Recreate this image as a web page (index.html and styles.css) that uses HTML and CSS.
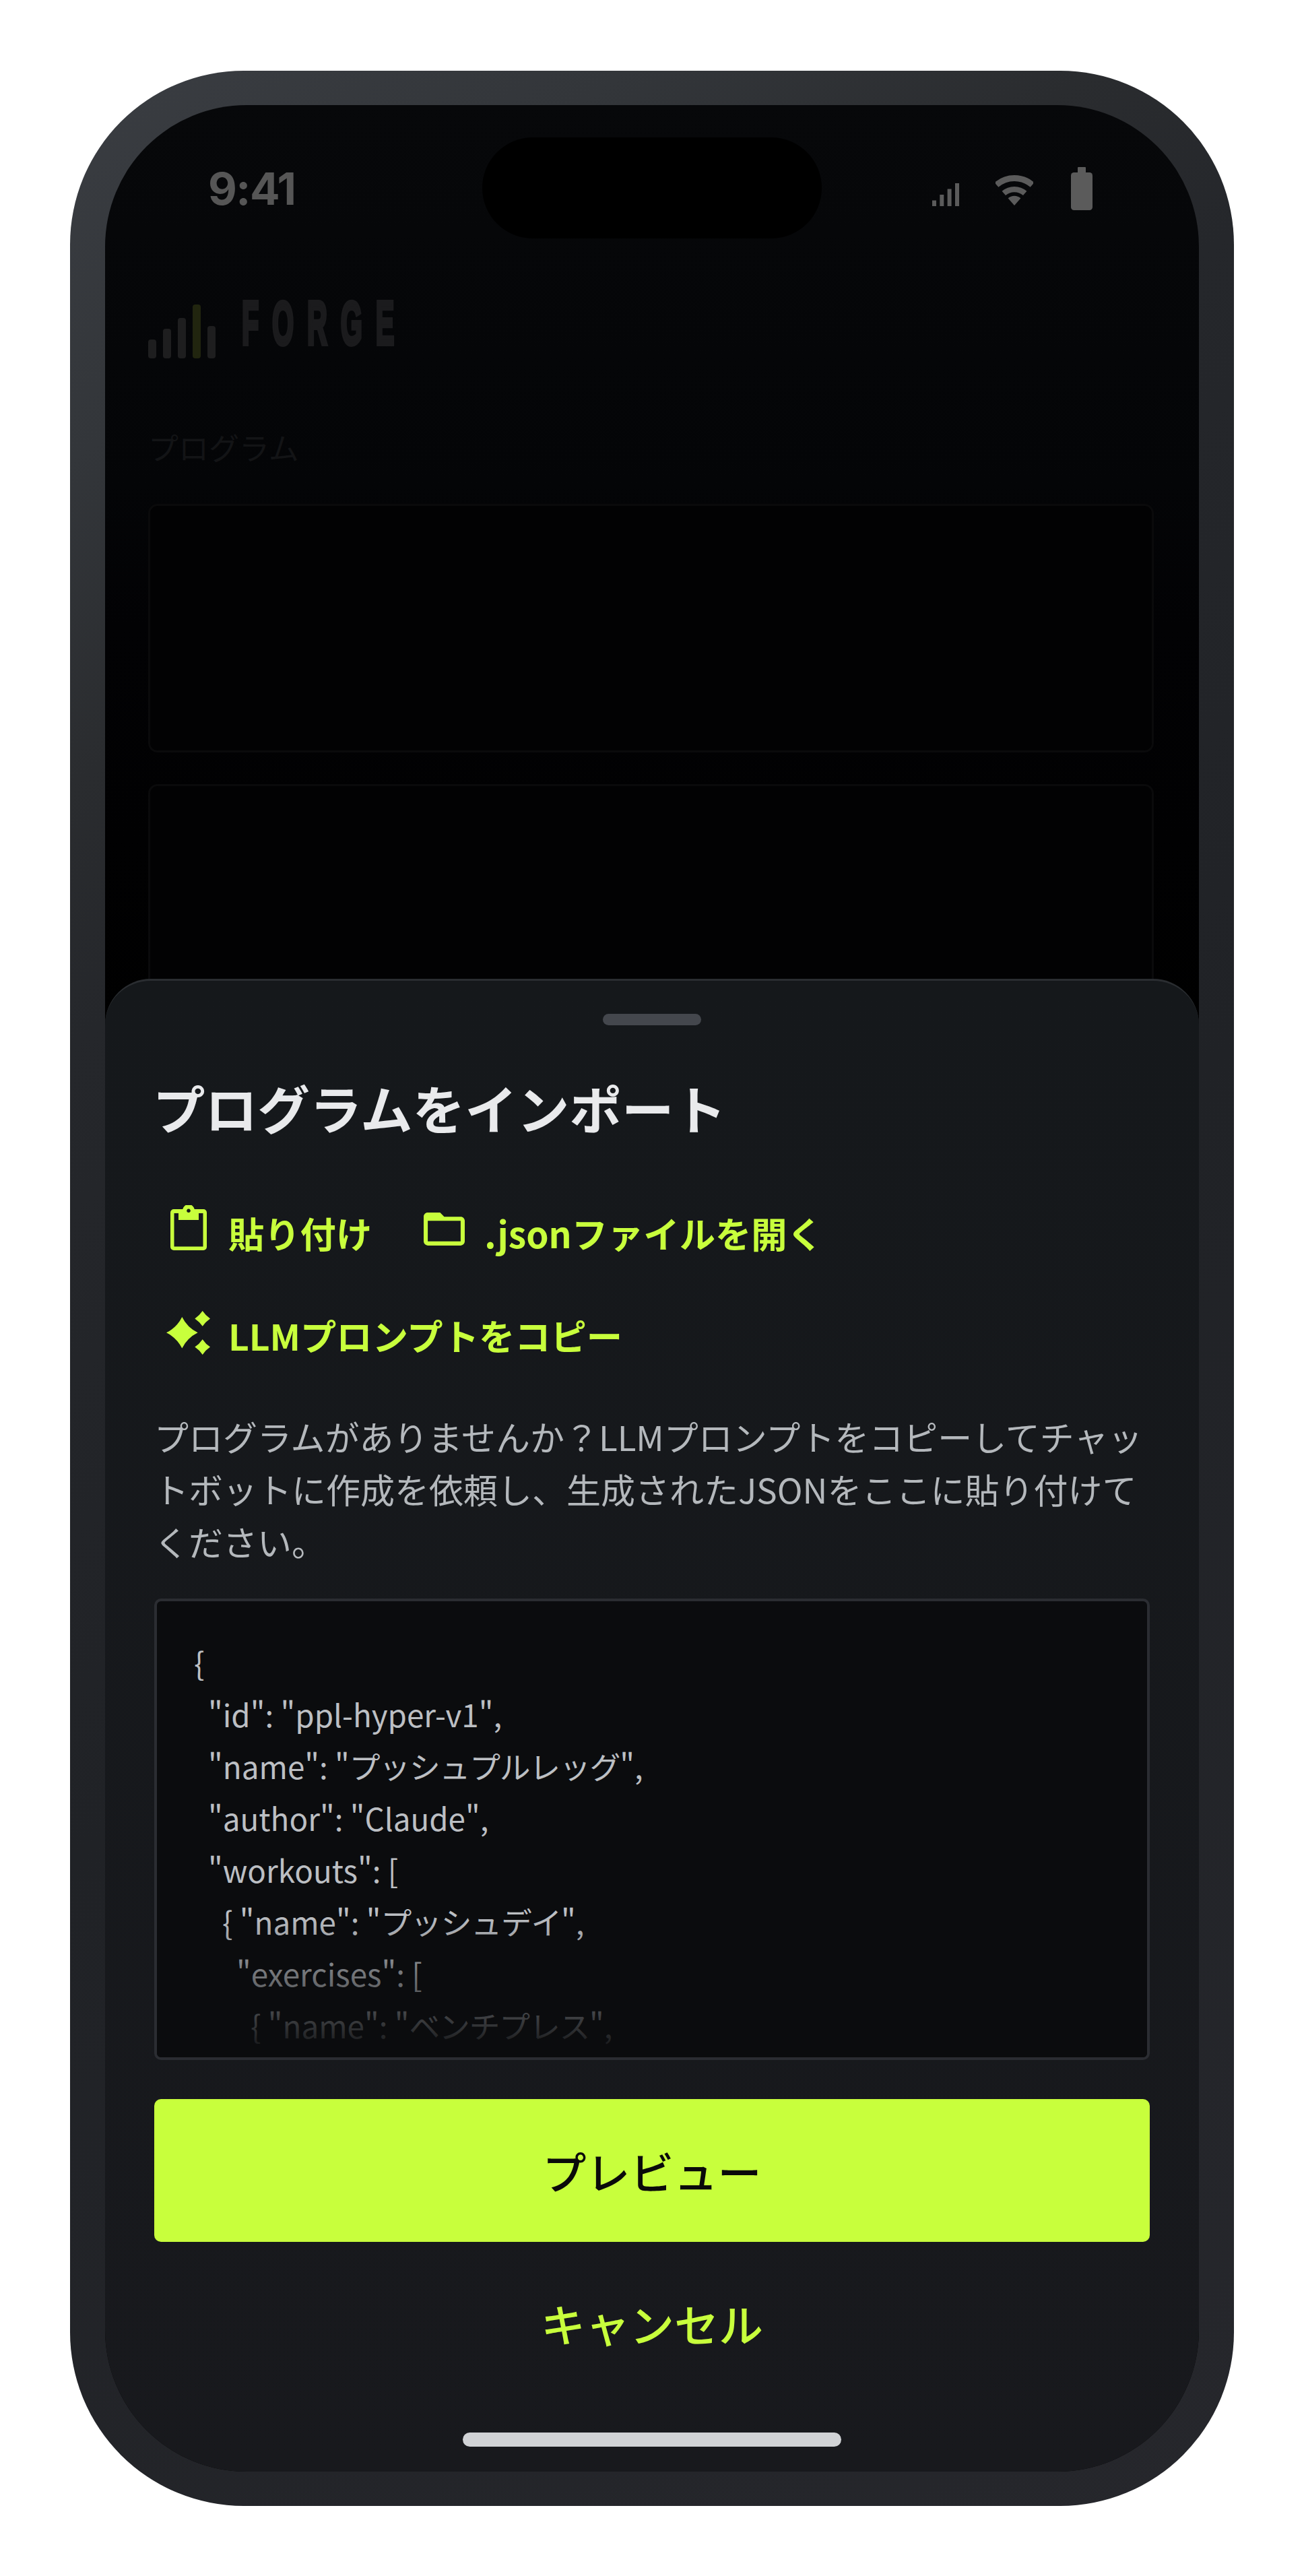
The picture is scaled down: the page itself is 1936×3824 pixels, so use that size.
FILE: index.html
```html
<!DOCTYPE html>
<html lang="ja">
<head>
<meta charset="utf-8">
<title>FORGE</title>
<link rel="stylesheet" href="styles.css">
</head>
<body>
<main class="phone">
  <div class="screen">
    <div class="island"></div>
    <header class="status">
      <span class="time">9:41</span>
      <div class="status-icons">
        <svg class="ic-signal" viewBox="0 0 40 64" aria-hidden="true"><rect x="0" y="49.5" width="6" height="8.5"/><rect x="11.3" y="41" width="6" height="17"/><rect x="22.6" y="32.5" width="6" height="25.5"/><rect x="34" y="24" width="6" height="34"/></svg>
        <svg class="ic-wifi" viewBox="0 0 56 64" aria-hidden="true"><g transform="translate(0 12)"><path class="wifi-arc" stroke-width="9" d="M1.4 14.4A40.5 40.5 0 0 1 54.6 14.4"/><path class="wifi-arc" stroke-width="8.3" d="M12.3 26.9A24 24 0 0 1 43.7 26.9"/><path d="M28 45L18.6 34.2A14.3 14.3 0 0 1 37.4 34.2Z"/></g></svg>
        <svg class="ic-battery" viewBox="0 0 32 64" aria-hidden="true"><rect x="10" y="0" width="12" height="9" rx="1"/><rect x="0" y="8" width="32" height="56" rx="4.5"/></svg>
      </div>
    </header>
    <div class="logo">
      <svg class="logo-mark" viewBox="0 0 100 80" aria-hidden="true"><rect x="0" y="52" width="12" height="28" rx="4"/><rect x="22" y="36" width="12" height="44" rx="4"/><rect x="44" y="20" width="12" height="60" rx="4"/><rect class="logo-accent" x="66" y="0" width="12" height="80" rx="4"/><rect x="88" y="32" width="12" height="48" rx="4"/></svg>
      <span class="logo-text">FORGE</span>
    </div>
    <h2 class="bg-label">プログラム</h2>
    <div class="bg-card"></div>
    <div class="bg-card"></div>

    <section class="sheet">
      <div class="handle"></div>
      <h1 class="sheet-title">プログラムをインポート</h1>
      <div class="actions">
        <button class="action">
          <span class="action-icon">
            <svg class="ic-clip" viewBox="0 0 54 67" aria-hidden="true"><path fill-rule="evenodd" d="M5 6H18.2A9 9 0 0 1 35.8 6H49A5 5 0 0 1 54 11V62A5 5 0 0 1 49 67H5A5 5 0 0 1 0 62V11A5 5 0 0 1 5 6ZM5.5 12V61.5H48.5V12H42V22H12V12ZM27 5.5A2.8 2.8 0 1 0 27.01 5.5Z"/></svg>
          </span>
          <span class="action-text">貼り付け</span>
        </button>
        <button class="action">
          <span class="action-icon">
            <svg class="ic-folder" viewBox="2 4 20 16" aria-hidden="true"><path d="M20,18H4V8H20M20,6H12L10,4H4C2.89,4 2,4.89 2,6V18A2,2 0 0,0 4,20H20A2,2 0 0,0 22,18V8C22,6.89 21.1,6 20,6Z"/></svg>
          </span>
          <span class="action-text">.jsonファイルを開く</span>
        </button>
      </div>
      <div class="actions actions-second">
        <button class="action">
          <span class="action-icon">
            <svg class="ic-spark" viewBox="0 0 65 65" aria-hidden="true"><path d="M23.3 9Q31 24.6 46.6 32.3Q31 40 23.3 55.6Q15.6 40 0 32.3Q15.6 24.6 23.3 9Z"/><path d="M53.7 0Q58.3 6.8 65 11.4Q58.3 16 53.7 22.8Q49.1 16 42.3 11.4Q49.1 6.8 53.7 0Z"/><path d="M53.7 42.2Q58.3 49 65 53.6Q58.3 58.2 53.7 65Q49.1 58.2 42.3 53.6Q49.1 49 53.7 42.2Z"/></svg>
          </span>
          <span class="action-text">LLMプロンプトをコピー</span>
        </button>
      </div>
      <p class="desc">プログラムがありませんか？LLMプロンプトをコピーしてチャットボットに作成を依頼し、生成されたJSONをここに貼り付けてください。</p>
      <div class="code">
        <div class="code-line">{</div>
        <div class="code-line indent-1">"id": "ppl-hyper-v1",</div>
        <div class="code-line indent-1">"name": "<span class="kana">プッシュプルレッグ</span>",</div>
        <div class="code-line indent-1">"author": "Claude",</div>
        <div class="code-line indent-1">"workouts": [</div>
        <div class="code-line indent-2">{ "name": "<span class="kana">プッシュデイ</span>",</div>
        <div class="code-line indent-3">"exercises": [</div>
        <div class="code-line indent-4">{ "name": "<span class="kana">ベンチプレス</span>",</div>
      </div>
      <button class="primary">プレビュー</button>
      <button class="cancel">キャンセル</button>
      <div class="home"></div>
    </section>
  </div>
</main>
</body>
</html>
```
FILE: styles.css
```css
* { box-sizing: border-box; }
html, body { margin: 0; padding: 0; background: #fff; }
body { font-family: "Noto Sans CJK JP", "Noto Sans", sans-serif; }

.phone {
  width: 1728px;
  height: 3615px;
  margin: 105px 0 0 104px;
  padding: 51px 52px;
  border-radius: 258px;
  background: linear-gradient(145deg, #3a3d42 0%, #33363a 12%, #2a2c2f 22%, #25272b 30%, #202226 55%, #26272c 100%);
}
.screen {
  position: relative;
  height: 100%;
  overflow: hidden;
  border-radius: 210px;
  background: linear-gradient(180deg, #07080a 0%, #040507 16%, #020204 22%, #000 40%);
  padding-top: 92px;
}
.island {
  position: absolute;
  top: 48px;
  left: 560px;
  width: 504px;
  height: 150px;
  border-radius: 75px;
  background: #000;
}
.status {
  display: flex;
  justify-content: space-between;
  align-items: center;
  height: 64px;
  padding: 0 158px 0 153px;
}
.time {
  font-family: "Inter", sans-serif;
  font-weight: 700;
  font-size: 66px;
  line-height: 64px;
  letter-spacing: -1.5px;
  color: #565656;
}
.status-icons { display: flex; align-items: flex-start; gap: 54px; fill: #5b5b5b; }
.status-icons svg { display: block; height: 64px; }
.ic-signal { width: 40px; }
.ic-wifi { width: 56px; }
.ic-battery { width: 32px; margin-left: 2px; }
.wifi-arc { fill: none; stroke: #5b5b5b; }

.logo {
  display: flex;
  align-items: flex-start;
  margin: 134px 0 0 64px;
  height: 86px;
}
.logo-mark { width: 100px; height: 80px; margin-top: 6px; fill: #1e1e1f; }
.logo-accent { fill: #21250f; }
.logo-text {
  display: inline-block;
  margin-left: 39px;
  font-family: "Liberation Sans", sans-serif;
  font-weight: 700;
  font-size: 90px;
  line-height: 68px;
  letter-spacing: 43px;
  color: #1b1b1d;
  -webkit-text-stroke: 6px #1b1b1d;
  transform: scaleX(0.46);
  transform-origin: left center;
}
.bg-label {
  margin: 102px 0 0 64px;
  font-size: 45px;
  line-height: 60px;
  font-weight: 400;
  color: #131416;
}
.bg-card {
  width: 1493px;
  height: 369px;
  margin: 54px 0 0 64px;
  border: 3px solid #0a0a0b;
  border-radius: 14px;
  background: #020203;
}
.bg-card + .bg-card { margin-top: 47px; }

.sheet {
  position: absolute;
  left: 0;
  right: 0;
  top: 1297px;
  bottom: 0;
  padding: 49px 73px 0;
  border-top: 3px solid #2a2d31;
  border-radius: 68px 68px 0 0;
  background: linear-gradient(180deg, #15181b 0%, #18191d 100%);
}
.handle {
  width: 146px;
  height: 17px;
  margin: 0 auto;
  border-radius: 9px;
  background: #44474d;
}
.sheet-title {
  margin: 76px 0 0 -2px;
  font-size: 77.6px;
  line-height: 90px;
  font-weight: 700;
  color: #e9eaec;
}
.actions {
  display: flex;
  gap: 70px;
  margin-top: 97px;
  padding-left: 13px;
}
.actions-second { margin-top: 81px; }
.action {
  display: flex;
  align-items: center;
  gap: 22px;
  height: 75px;
  padding: 0;
  border: 0;
  background: none;
  font: inherit;
  color: #c8ff3c;
}
.action-icon {
  display: flex;
  justify-content: center;
  width: 75px;
  fill: #c8ff3c;
}
.action-text {
  padding-top: 14px;
  font-size: 53.3px;
  line-height: 70px;
  font-weight: 700;
}
.actions-second .action-text { padding-top: 7px; }
.ic-clip { width: 54px; height: 67px; display: block; }
.ic-folder { width: 61px; height: 49px; display: block; margin-top: 3px; }
.ic-spark { width: 65px; height: 65px; display: block; }

.desc {
  margin: 77px 0 0;
  font-size: 51px;
  line-height: 78px;
  color: #b4b8bc;
}
.code {
  position: relative;
  height: 685px;
  margin-top: 46px;
  padding: 52px 55px 0;
  overflow: hidden;
  border: 4px solid #2b2d32;
  border-radius: 10px;
  background: #0b0c0e;
}
.code::after {
  content: "";
  position: absolute;
  left: 0;
  right: 0;
  bottom: 0;
  height: 210px;
  background: linear-gradient(180deg, rgba(11, 12, 14, 0) 0%, rgba(11, 12, 14, 1) 100%);
}
.code-line {
  font-size: 45.8px;
  line-height: 77px;
  white-space: pre;
  color: #bcbfc3;
}
.indent-1 { padding-left: 21px; }
.indent-2 { padding-left: 42px; }
.indent-3 { padding-left: 63px; }
.indent-4 { padding-left: 84px; }
.kana { letter-spacing: -1.2px; }
.primary {
  display: block;
  width: 100%;
  height: 212px;
  margin-top: 58px;
  padding: 0;
  border: 0;
  border-radius: 10px;
  background: #c8ff3c;
  font: inherit;
  font-size: 65px;
  font-weight: 500;
  color: #0a0a0a;
}
.cancel {
  display: block;
  width: 100%;
  height: 100px;
  margin-top: 70px;
  padding: 0;
  border: 0;
  background: none;
  font: inherit;
  font-size: 66px;
  font-weight: 500;
  line-height: 100px;
  color: #c8ff3c;
}
.home {
  width: 562px;
  height: 21px;
  margin: 113px auto 0;
  border-radius: 11px;
  background: #d1d3d6;
}
```
